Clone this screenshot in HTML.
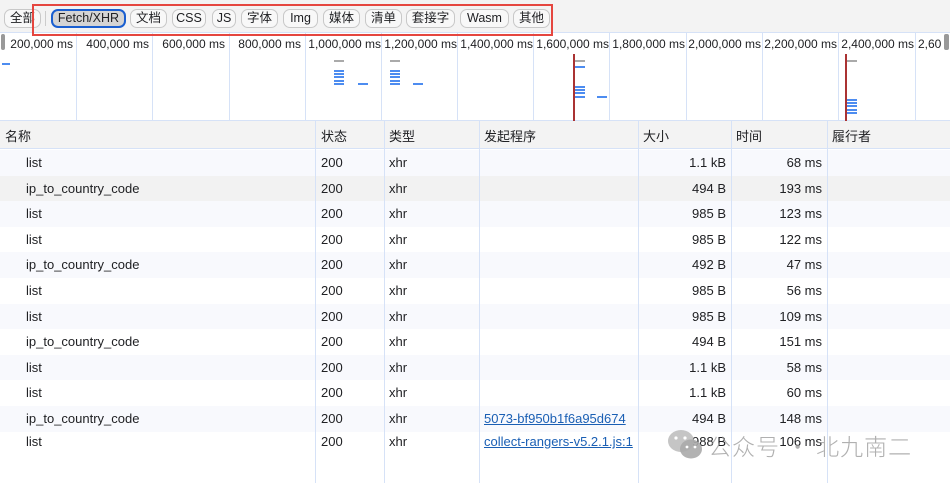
<!DOCTYPE html>
<html><head><meta charset="utf-8"><style>
*{margin:0;padding:0;box-sizing:border-box}
body{width:950px;height:483px;overflow:hidden;background:#fff;font-family:"Liberation Sans","Noto Sans CJK SC",sans-serif;font-size:13px;color:#202124;position:relative}
.tb{position:absolute;left:0;top:0;width:950px;height:33px;background:#f3f3f3;border-bottom:1px solid #d6e2f7}
.btn{position:absolute;top:9px;height:19px;border:1px solid #c8c8c8;border-radius:7px;background:#f8f8f8;font-size:12.5px;line-height:17px;text-align:center;color:#202124}
.red{position:absolute;left:32px;top:4px;width:521px;height:32px;border:2px solid #e5463f;z-index:5}
.tl{position:absolute;left:0;top:33px;width:950px;height:88px;background:#fff;border-bottom:1px solid #d6e2f7}
.gl{position:absolute;top:0;width:1px;height:88px;background:#d6e2f7}
.lb{position:absolute;top:4px;font-size:12px;text-align:right;width:80px}
.b{position:absolute;height:2px;width:10px;background:#4d8cf0}
.g{position:absolute;height:2px;width:10px;background:#aaa}
.hd{position:absolute;left:0;top:121px;width:950px;height:28px;background:#f3f3f3;border-bottom:1px solid #d6e2f7}
.row{position:absolute;left:0;width:950px;height:25.6px;line-height:25px}
.c{position:absolute;top:0;white-space:nowrap}
.vl{position:absolute;top:121px;width:1px;height:362px;background:#d6e2f7}
a{color:#1a5fb4;text-decoration:underline}
</style></head><body>
<div class="tb"></div>
<div class="btn" style="left:4px;width:37px">全部</div>
<div style="position:absolute;left:45px;top:11px;width:1px;height:15px;background:#ccc"></div>
<div class="btn" style="left:51px;width:75px;background:#d4d4d4;border:2px solid #1a5fd0;line-height:15px">Fetch/XHR</div>
<div class="btn" style="left:130px;width:37px">文档</div>
<div class="btn" style="left:172px;width:34px">CSS</div>
<div class="btn" style="left:212px;width:24px">JS</div>
<div class="btn" style="left:241px;width:37px">字体</div>
<div class="btn" style="left:283px;width:35px">Img</div>
<div class="btn" style="left:323px;width:37px">媒体</div>
<div class="btn" style="left:365px;width:37px">清单</div>
<div class="btn" style="left:406px;width:49px">套接字</div>
<div class="btn" style="left:460px;width:49px">Wasm</div>
<div class="btn" style="left:513px;width:37px">其他</div>

<div class="tl">
<div style="position:absolute;left:1px;top:1px;width:4px;height:16px;background:#999;border-radius:2px"></div>
<div style="position:absolute;left:944px;top:1px;width:5px;height:16px;background:#999;border-radius:2px"></div>
<div class="lb" style="left:-7px">200,000 ms</div><div class="gl" style="left:76px"></div>
<div class="lb" style="left:69px">400,000 ms</div><div class="gl" style="left:152px"></div>
<div class="lb" style="left:145px">600,000 ms</div><div class="gl" style="left:229px"></div>
<div class="lb" style="left:221px">800,000 ms</div><div class="gl" style="left:305px"></div>
<div class="lb" style="left:296px;width:85px">1,000,000 ms</div><div class="gl" style="left:381px"></div>
<div class="lb" style="left:372px;width:85px">1,200,000 ms</div><div class="gl" style="left:457px"></div>
<div class="lb" style="left:448px;width:85px">1,400,000 ms</div><div class="gl" style="left:533px"></div>
<div class="lb" style="left:524px;width:85px">1,600,000 ms</div><div class="gl" style="left:609px"></div>
<div class="lb" style="left:600px;width:85px">1,800,000 ms</div><div class="gl" style="left:686px"></div>
<div class="lb" style="left:676px;width:85px">2,000,000 ms</div><div class="gl" style="left:762px"></div>
<div class="lb" style="left:752px;width:85px">2,200,000 ms</div><div class="gl" style="left:838px"></div>
<div class="lb" style="left:829px;width:85px">2,400,000 ms</div><div class="gl" style="left:915px"></div>
<div class="lb" style="left:918px;text-align:left;width:26px;overflow:hidden">2,60</div>
<div class="b" style="left:2px;top:30px;width:8px"></div>
<div class="g" style="left:334px;top:27px"></div>
<div class="b" style="left:334px;top:37px"></div><div class="b" style="left:334px;top:40px"></div><div class="b" style="left:334px;top:43px"></div><div class="b" style="left:334px;top:47px"></div><div class="b" style="left:334px;top:50px"></div>
<div class="b" style="left:358px;top:50px"></div>
<div class="g" style="left:390px;top:27px"></div>
<div class="b" style="left:390px;top:37px"></div><div class="b" style="left:390px;top:40px"></div><div class="b" style="left:390px;top:43px"></div><div class="b" style="left:390px;top:47px"></div><div class="b" style="left:390px;top:50px"></div>
<div class="b" style="left:413px;top:50px"></div>
<div style="position:absolute;left:573px;top:21px;width:2px;height:67px;background:#a33"></div>
<div class="g" style="left:575px;top:27px"></div>
<div class="b" style="left:575px;top:33px"></div>
<div class="b" style="left:575px;top:53px"></div><div class="b" style="left:575px;top:56px"></div><div class="b" style="left:575px;top:59px"></div><div class="b" style="left:575px;top:63px"></div>
<div class="b" style="left:597px;top:63px"></div>
<div style="position:absolute;left:845px;top:21px;width:2px;height:67px;background:#a33"></div>
<div class="g" style="left:847px;top:27px"></div>
<div class="b" style="left:847px;top:66px"></div><div class="b" style="left:847px;top:69px"></div><div class="b" style="left:847px;top:72px"></div><div class="b" style="left:847px;top:76px"></div><div class="b" style="left:847px;top:79px"></div>
</div>
<div class="red"></div>

<div class="hd"></div>
<div style="position:absolute;top:126px;left:5px">名称</div>
<div style="position:absolute;top:126px;left:321px">状态</div>
<div style="position:absolute;top:126px;left:389px">类型</div>
<div style="position:absolute;top:126px;left:484px">发起程序</div>
<div style="position:absolute;top:126px;left:643px">大小</div>
<div style="position:absolute;top:126px;left:736px">时间</div>
<div style="position:absolute;top:126px;left:832px">履行者</div>

<div class="row" style="top:150px;background:#f8f9fd"><span class="c" style="left:26px">list</span><span class="c" style="left:321px">200</span><span class="c" style="left:389px">xhr</span><span class="c" style="right:224px">1.1 kB</span><span class="c" style="right:128px">68 ms</span></div>
<div class="row" style="top:175.6px;background:#f2f2f2"><span class="c" style="left:26px">ip_to_country_code</span><span class="c" style="left:321px">200</span><span class="c" style="left:389px">xhr</span><span class="c" style="right:224px">494 B</span><span class="c" style="right:128px">193 ms</span></div>
<div class="row" style="top:201.2px;background:#f8f9fd"><span class="c" style="left:26px">list</span><span class="c" style="left:321px">200</span><span class="c" style="left:389px">xhr</span><span class="c" style="right:224px">985 B</span><span class="c" style="right:128px">123 ms</span></div>
<div class="row" style="top:226.8px"><span class="c" style="left:26px">list</span><span class="c" style="left:321px">200</span><span class="c" style="left:389px">xhr</span><span class="c" style="right:224px">985 B</span><span class="c" style="right:128px">122 ms</span></div>
<div class="row" style="top:252.4px;background:#f8f9fd"><span class="c" style="left:26px">ip_to_country_code</span><span class="c" style="left:321px">200</span><span class="c" style="left:389px">xhr</span><span class="c" style="right:224px">492 B</span><span class="c" style="right:128px">47 ms</span></div>
<div class="row" style="top:278px"><span class="c" style="left:26px">list</span><span class="c" style="left:321px">200</span><span class="c" style="left:389px">xhr</span><span class="c" style="right:224px">985 B</span><span class="c" style="right:128px">56 ms</span></div>
<div class="row" style="top:303.6px;background:#f8f9fd"><span class="c" style="left:26px">list</span><span class="c" style="left:321px">200</span><span class="c" style="left:389px">xhr</span><span class="c" style="right:224px">985 B</span><span class="c" style="right:128px">109 ms</span></div>
<div class="row" style="top:329.2px"><span class="c" style="left:26px">ip_to_country_code</span><span class="c" style="left:321px">200</span><span class="c" style="left:389px">xhr</span><span class="c" style="right:224px">494 B</span><span class="c" style="right:128px">151 ms</span></div>
<div class="row" style="top:354.8px;background:#f8f9fd"><span class="c" style="left:26px">list</span><span class="c" style="left:321px">200</span><span class="c" style="left:389px">xhr</span><span class="c" style="right:224px">1.1 kB</span><span class="c" style="right:128px">58 ms</span></div>
<div class="row" style="top:380.4px"><span class="c" style="left:26px">list</span><span class="c" style="left:321px">200</span><span class="c" style="left:389px">xhr</span><span class="c" style="right:224px">1.1 kB</span><span class="c" style="right:128px">60 ms</span></div>
<div class="row" style="top:406px;background:#f8f9fd"><span class="c" style="left:26px">ip_to_country_code</span><span class="c" style="left:321px">200</span><span class="c" style="left:389px">xhr</span><span class="c" style="left:484px;width:154px;overflow:hidden"><a>5073-bf950b1f6a95d674</a></span><span class="c" style="right:224px">494 B</span><span class="c" style="right:128px">148 ms</span></div>
<div class="row" style="top:429px"><span class="c" style="left:26px">list</span><span class="c" style="left:321px">200</span><span class="c" style="left:389px">xhr</span><span class="c" style="left:484px;width:154px;overflow:hidden"><a>collect-rangers-v5.2.1.js:1</a></span><span class="c" style="right:224px">988 B</span><span class="c" style="right:128px">106 ms</span></div>

<div class="vl" style="left:315px"></div><div class="vl" style="left:384px"></div><div class="vl" style="left:479px"></div><div class="vl" style="left:638px"></div><div class="vl" style="left:731px"></div><div class="vl" style="left:827px"></div>

<svg style="position:absolute;left:666px;top:428px" width="40" height="34" viewBox="0 0 40 34"><ellipse cx="15" cy="13" rx="13" ry="11" fill="#bbb" opacity=".85"/><ellipse cx="25" cy="21" rx="11" ry="9.5" fill="#aaa" opacity=".9"/><circle cx="10" cy="10" r="1.6" fill="#fff"/><circle cx="19" cy="10" r="1.6" fill="#fff"/><circle cx="21" cy="19" r="1.4" fill="#fff"/><circle cx="29" cy="19" r="1.4" fill="#fff"/></svg>
<div style="position:absolute;left:708px;top:428px;font-size:23px;color:rgba(150,150,150,.75);font-family:'Noto Sans CJK SC',sans-serif;font-weight:300;letter-spacing:1px;white-space:nowrap">公众号 · 北九南二</div>
</body></html>
